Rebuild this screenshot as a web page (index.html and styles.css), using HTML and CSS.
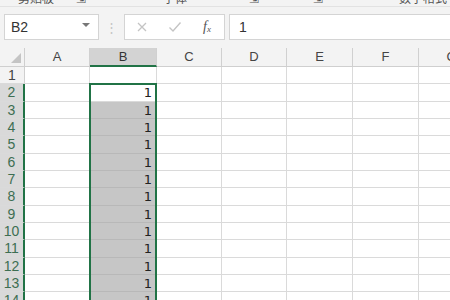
FILE: index.html
```html
<!DOCTYPE html>
<html lang="zh">
<head>
    <meta charset="UTF-8">
    <title>Sheet</title>
    <link rel="stylesheet" href="styles.css">
</head>
<body>
    <div class="ribbon">
        <span class="rb-label l1">剪贴板</span>
        <span class="rb-label l2">⇲</span>
        <span class="rb-label l3">字体</span>
        <span class="rb-label l4">⇲</span>
        <span class="rb-label l5">⇲</span>
        <span class="rb-label l6">数字格式</span>
    </div>

    <div class="formula-bar">
        <div class="name-box">
            <span>B2</span>
            <span class="caret"></span>
        </div>
        <div class="grip">⋮</div>
        <div class="fx-box">
            <svg width="12" height="12" viewBox="0 0 12 12"><path d="M2 2 L10 10 M10 2 L2 10" stroke="#c4c4c4" stroke-width="1.3" fill="none"/></svg>
            <svg width="14" height="12" viewBox="0 0 14 12"><path d="M1.5 6.5 L5 10 L12.5 1.5" stroke="#c4c4c4" stroke-width="1.4" fill="none"/></svg>
            <span class="fx">f<sub>x</sub></span>
        </div>
        <div class="input-box">1</div>
    </div>

    <div class="sheet-wrap">
        <div class="sheet" id="sheet"></div>
        <div class="selection"></div>
    </div>

    <script>
        const sheet = document.getElementById('sheet');
        const cols = ['A', 'B', 'C', 'D', 'E', 'F', 'G'];

        // header row
        const corner = document.createElement('div');
        corner.className = 'corner';
        corner.innerHTML = '<span class="tri"></span>';
        sheet.appendChild(corner);
        cols.forEach(function(c) {
            const h = document.createElement('div');
            h.className = 'col-head' + (c === 'B' ? ' active' : '');
            h.textContent = c;
            sheet.appendChild(h);
        });

        for (let r = 1; r <= 14; r++) {
            const rh = document.createElement('div');
            rh.className = 'row-head' + (r >= 2 ? ' active' : '');
            rh.textContent = r;
            sheet.appendChild(rh);
            cols.forEach(function(c) {
                const cell = document.createElement('div');
                cell.className = 'cell';
                if (c === 'B' && r >= 2) {
                    cell.textContent = '1';
                    cell.className += r === 2 ? ' current' : ' picked';
                }
                sheet.appendChild(cell);
            });
        }
    </script>
</body>
</html>
```

FILE: styles.css
```css
body {
    margin: 0;
    width: 450px;
    height: 300px;
    overflow: hidden;
    background-color: #f3f3f3;
    font-family: 'Liberation Sans', 'Noto Sans CJK SC', sans-serif;
}
.ribbon {
    height: 6px;
    overflow: hidden;
    border-bottom: 1px solid #e2e2e2;
    display: flex;
    white-space: nowrap;
}
.rb-label {
    font-size: 12px;
    line-height: 12px;
    color: #555;
    margin-top: -7px;
}
.l1 { margin-left: 18px; }
.l2 { margin-left: 22px; }
.l3 { margin-left: 77px; }
.l4 { margin-left: 62px; }
.l5 { margin-left: 54px; }
.l6 { margin-left: 76px; }

.formula-bar {
    display: flex;
    align-items: center;
    height: 26px;
    margin-top: 7px;
}
.name-box {
    width: 95px;
    height: 26px;
    margin-left: 4px;
    box-sizing: border-box;
    background-color: white;
    border: 1px solid #d4d4d4;
    display: flex;
    align-items: center;
    justify-content: space-between;
    padding: 0 8px 0 6px;
    font-size: 14px;
    color: #333;
}
.caret {
    width: 0;
    height: 0;
    border-left: 4px solid transparent;
    border-right: 4px solid transparent;
    border-top: 4px solid #777;
    margin-top: -4px;
}
.grip {
    width: 25px;
    text-align: center;
    color: #c4c4c4;
    font-size: 13px;
}
.fx-box {
    width: 101px;
    height: 26px;
    box-sizing: border-box;
    background-color: white;
    border: 1px solid #d4d4d4;
    display: flex;
    align-items: center;
    padding-left: 11px;
    gap: 20px;
}
.fx {
    font-family: 'Liberation Serif', serif;
    font-style: italic;
    font-size: 14px;
    color: #555;
    margin-left: 1px;
}
.fx sub {
    font-size: 9px;
    vertical-align: -1px;
}
.input-box {
    flex: 1;
    height: 26px;
    margin-left: 4px;
    box-sizing: border-box;
    background-color: white;
    border: 1px solid #d4d4d4;
    border-right: none;
    padding-left: 9px;
    line-height: 24px;
    font-size: 14px;
    color: #333;
}

.sheet-wrap {
    position: relative;
    margin-top: 8px;
}
.sheet {
    display: grid;
    grid-template-columns: 25px 65px 67px 65px 65px 66px 66px 66px;
    grid-template-rows: 19px repeat(14, 17.34px);
    background-color: white;
}
.corner {
    background-color: #f3f3f3;
    border-right: 1px solid #cfcfcf;
    border-bottom: 1px solid #cfcfcf;
    position: relative;
}
.tri {
    position: absolute;
    right: 3px;
    bottom: 3px;
    width: 0;
    height: 0;
    border-left: 10px solid transparent;
    border-bottom: 10px solid #c4c4c4;
}
.col-head {
    background-color: #f3f3f3;
    border-right: 1px solid #d0d0d0;
    border-bottom: 1px solid #cfcfcf;
    text-align: center;
    font-size: 13px;
    line-height: 18px;
    color: #444;
}
.col-head.active {
    background-color: #d3d3d3;
    border-bottom: 2px solid #217346;
    color: #333;
}
.row-head {
    background-color: #f3f3f3;
    border-right: 1px solid #cfcfcf;
    border-bottom: 1px solid #dadada;
    text-align: center;
    font-size: 14px;
    line-height: 17px;
    color: #444;
    box-sizing: border-box;
}
.row-head.active {
    background-color: #d9d9d9;
    border-right: 2px solid #217346;
    color: #3d6e52;
}
.cell {
    border-right: 1px solid #dadada;
    border-bottom: 1px solid #dadada;
    text-align: right;
    padding-right: 4px;
    font-family: 'DejaVu Sans', sans-serif;
    font-size: 13px;
    line-height: 17px;
    color: #222;
    box-sizing: border-box;
}
.cell.picked {
    background-color: #c6c6c6;
    border-bottom-color: #b8b8b8;
}
.selection {
    position: absolute;
    left: 89px;
    top: 35px;
    width: 68px;
    height: 240px;
    box-sizing: border-box;
    border: 2px solid #217346;
    pointer-events: none;
}
```
